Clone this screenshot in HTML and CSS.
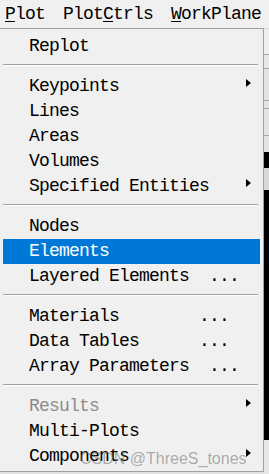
FILE: index.html
```html
<!DOCTYPE html>
<html lang="en">
<head>
  <meta charset="UTF-8">
  <title>Plot menu</title>
  <link rel="stylesheet" href="styles.css">
</head>
<body>
  <div class="menubar">
    <span class="bar-item"><u>P</u>lot</span>
    <span class="bar-item">Plot<u>C</u>trls</span>
    <span class="bar-item"><u>W</u>orkPlane</span>
  </div>

  <div class="stage">
    <div class="menu">
      <div class="item">Replot</div>
      <div class="sep"></div>
      <div class="item">Keypoints<span class="arrow"></span></div>
      <div class="item">Lines</div>
      <div class="item">Areas</div>
      <div class="item">Volumes</div>
      <div class="item">Specified Entities<span class="arrow"></span></div>
      <div class="sep"></div>
      <div class="item">Nodes</div>
      <div class="item active">Elements</div>
      <div class="item">Layered Elements  ...</div>
      <div class="sep"></div>
      <div class="item">Materials        ...</div>
      <div class="item">Data Tables      ...</div>
      <div class="item">Array Parameters  ...</div>
      <div class="sep"></div>
      <div class="item disabled">Results<span class="arrow"></span></div>
      <div class="item">Multi-Plots</div>
      <div class="item">Components<span class="arrow"></span></div>
      <div class="watermark">CSDN @ThreeS_tones</div>
    </div>
    <div class="backdrop"></div>
  </div>
</body>
</html>
```

FILE: styles.css
```css
body {
  margin: 0;
  width: 269px;
  height: 474px;
  overflow: hidden;
  background: #f0f0f0;
  font-family: "Liberation Mono", monospace;
  font-size: 18px;
  letter-spacing: -0.8px;
  color: #000;
}

.menubar {
  height: 28px;
  display: flex;
  gap: 18px;
  padding-left: 5px;
  line-height: 28px;
  white-space: pre;
}

.bar-item u {
  text-underline-offset: 2px;
}

.stage {
  display: flex;
  height: 446px;
  background: #e2e2e2;
}

.menu {
  position: relative;
  width: 263px;
  height: 436px;
  padding: 5px 0 1px;
  background: #f0f0f0;
  border-top: 1px solid #a0a0a0;
  border-right: 1px solid #a0a0a0;
  border-bottom: 1px solid #a0a0a0;
}

.item {
  display: flex;
  height: 25px;
  line-height: 25px;
  margin: 0 3px 0 3px;
  padding: 0 9px 0 26px;
  white-space: pre;
}

.item.active {
  background: #0078d7;
  color: #fff;
}

.item.disabled {
  color: #8c8c8c;
}

.arrow {
  margin-left: auto;
  margin-top: 5px;
  width: 0;
  height: 0;
  border-left: 5px solid #000;
  border-top: 4px solid transparent;
  border-bottom: 4px solid transparent;
}

.sep {
  height: 15px;
  box-sizing: border-box;
  padding-top: 5px;
  margin: 0 5px 0 3px;
}

.sep::before {
  content: "";
  display: block;
  border-top: 1px solid #a0a0a0;
  border-bottom: 1px solid #fff;
}

.watermark {
  position: absolute;
  left: 80px;
  top: 421px;
  font-family: "Liberation Sans", Arial, sans-serif;
  font-size: 16px;
  letter-spacing: 0;
  color: rgba(110, 110, 110, 0.55);
}

.backdrop {
  flex: 1;
  background: linear-gradient(to bottom,
    #d8d8d8 0, #d8d8d8 1px, #eeeeee 1px, #eeeeee 26px,
    #a8a8a8 26px, #a8a8a8 27px, #e8e8e8 27px, #e8e8e8 40px,
    #a8a8a8 40px, #a8a8a8 41px, #e4e4e4 41px, #e4e4e4 72px,
    #a8a8a8 72px, #a8a8a8 73px, #e4e4e4 73px, #e4e4e4 80px,
    #a8a8a8 80px, #a8a8a8 81px, #e4e4e4 81px, #e4e4e4 107px,
    #a8a8a8 107px, #a8a8a8 108px, #e4e4e4 108px, #e4e4e4 124px,
    #000 124px, #000 140px, #d8d8d8 140px, #d8d8d8 162px,
    #000 162px, #000 412px, #e8e8e8 412px);
}
```
